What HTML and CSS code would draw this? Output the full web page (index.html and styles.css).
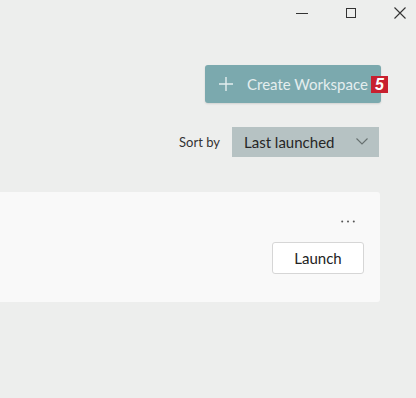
FILE: index.html
```html
<!DOCTYPE html>
<html lang="en">
<head>
  <meta charset="UTF-8">
  <title>Workspaces</title>
  <link rel="stylesheet" href="styles.css">
</head>
<body>
  <!-- Window caption buttons -->
  <div class="titlebar">
    <span class="caption-btn">
      <svg width="12" height="12" viewBox="0 0 12 12"><path d="M0 6.5h12" stroke="#333" stroke-width="1"/></svg>
    </span>
    <span class="caption-btn">
      <svg width="12" height="12" viewBox="0 0 12 12"><rect x="1.5" y="1.5" width="9" height="9" fill="none" stroke="#333" stroke-width="1"/></svg>
    </span>
    <span class="caption-btn">
      <svg width="12" height="12" viewBox="0 0 12 12"><path d="M0.5 0.5l11 11M11.5 0.5l-11 11" stroke="#333" stroke-width="1.1"/></svg>
    </span>
  </div>

  <div class="toolbar">
    <button class="create-btn">
      <svg class="plus" width="14" height="14" viewBox="0 0 14 14"><path d="M7 0v14M0 7h14" stroke="#e4eeef" stroke-width="1.4"/></svg>
      Create Workspace
      <span class="badge">5</span>
    </button>
  </div>

  <div class="sort-row">
    <span class="sort-label">Sort by</span>
    <div class="dropdown">
      <span>Last launched</span>
      <svg width="12" height="7" viewBox="0 0 12 7"><path d="M0.5 0.5l5.5 5.5 5.5-5.5" fill="none" stroke="#66706f" stroke-width="1.1"/></svg>
    </div>
  </div>

  <div class="card">
    <div class="card-actions">
      <svg class="more" width="14" height="3" viewBox="0 0 14 3">
        <circle cx="1.2" cy="1.5" r="1" fill="#555"/>
        <circle cx="7" cy="1.5" r="1" fill="#555"/>
        <circle cx="12.8" cy="1.5" r="1" fill="#555"/>
      </svg>
      <button class="launch-btn">Launch</button>
    </div>
  </div>
</body>
</html>
```

FILE: styles.css
```css
/**
 * Base.
 */
* {
  box-sizing: border-box;
}
body {
  margin: 0;
  background-color: #edeeed;
  font-family: 'Segoe UI', Lato, 'Noto Sans', sans-serif;
  overflow: hidden;
}
button {
  font-family: inherit;
}

/**
 * Title bar.
 */
.titlebar {
  display: flex;
  justify-content: flex-end;
  gap: 37px;
  height: 28px;
  padding: 7px 10px 0 0;
}
.caption-btn {
  display: flex;
  width: 12px;
  height: 12px;
}

/**
 * Toolbar.
 */
.toolbar {
  display: flex;
  justify-content: flex-end;
  padding-right: 35px;
  margin-top: 37px;
}
.create-btn {
  position: relative;
  display: flex;
  align-items: center;
  gap: 14px;
  width: 176px;
  height: 38px;
  padding: 0 0 0 14px;
  color: #e4eeef;
  font-size: 15px;
  background-color: #7ba9ae;
  border: none;
  border-radius: 3px;
  box-shadow: 0 1px 2px rgba(0, 0, 0, 0.12);
  white-space: nowrap;
}
.badge {
  position: absolute;
  top: 11px;
  right: -7px;
  width: 17px;
  height: 17px;
  color: white;
  font-family: 'Liberation Sans', Arial, sans-serif;
  font-weight: bold;
  font-style: italic;
  font-size: 16px;
  line-height: 17px;
  text-align: center;
  background-color: #c8202f;
}

/**
 * Sort row.
 */
.sort-row {
  display: flex;
  justify-content: flex-end;
  align-items: center;
  gap: 12px;
  margin-top: 24px;
  padding-right: 37px;
}
.sort-label {
  color: #333;
  font-size: 13px;
}
.dropdown {
  display: flex;
  justify-content: space-between;
  align-items: center;
  width: 147px;
  height: 30px;
  padding: 0 11px 1px 12px;
  color: #262626;
  font-size: 15px;
  background-color: #b6c2c3;
}

/**
 * Workspace card.
 */
.card {
  display: flex;
  justify-content: flex-end;
  width: 380px;
  height: 110px;
  margin-top: 35px;
  background-color: #f9f9f9;
  border-radius: 0 3px 3px 0;
}
.card-actions {
  display: flex;
  flex-direction: column;
  align-items: flex-end;
  padding: 28px 16px 0 0;
}
.more {
  margin-right: 9px;
}
.launch-btn {
  width: 92px;
  height: 32px;
  margin-top: 19px;
  color: #222;
  font-size: 15px;
  background-color: #fff;
  border: 1px solid #d6d6d6;
  border-radius: 3px;
}
```
